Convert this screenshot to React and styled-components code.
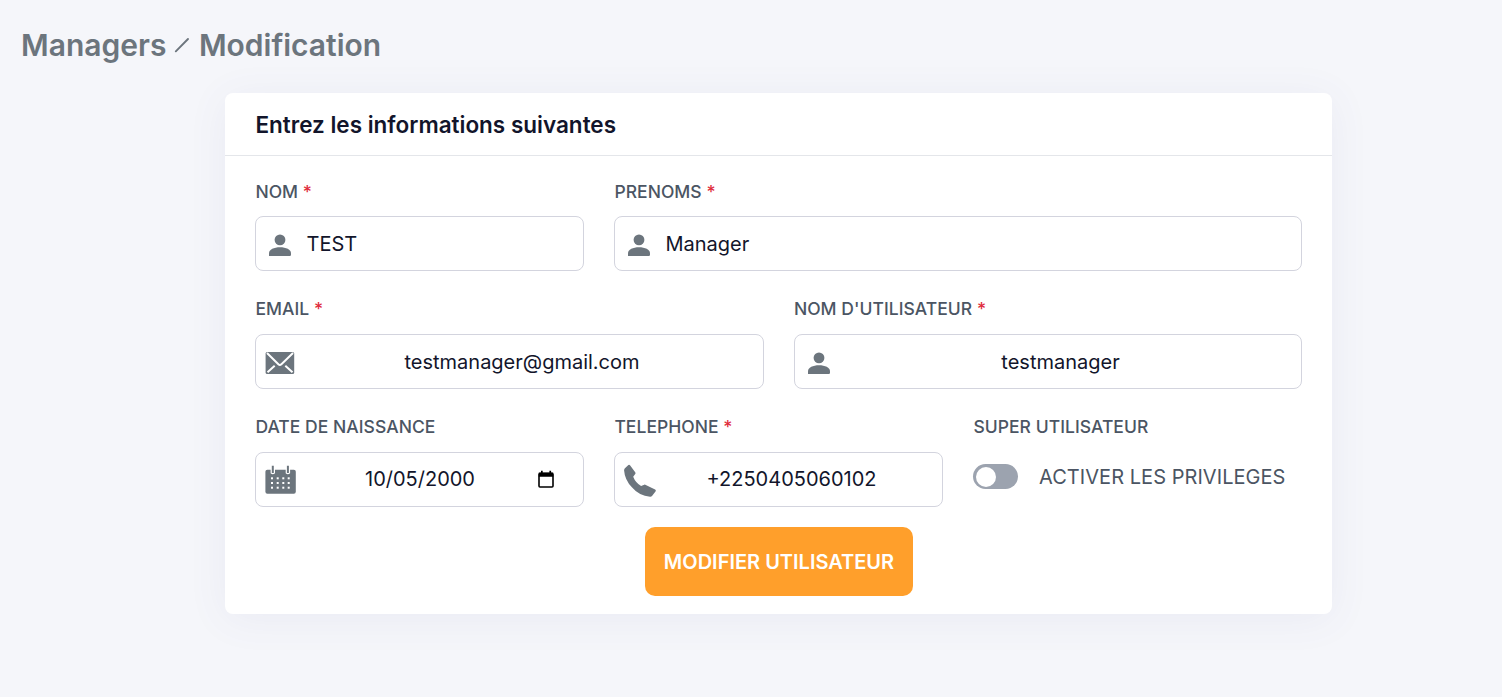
import React from 'react';
import styled, { createGlobalStyle } from 'styled-components';

const GlobalStyle = createGlobalStyle`
  *, *::before, *::after { box-sizing: border-box; }
  body {
    margin: 0;
    background: #f5f6fa;
    color: #12152b;
    font-family: Inter, "Liberation Sans", sans-serif;
  }
`;

const Page = styled.main`
  min-height: 697px;
  padding: 20px 20px 0;
`;

const Breadcrumb = styled.h1`
  display: flex;
  align-items: center;
  height: 50px;
  margin: 0;
  padding-left: 1px;
  color: #6c757d;
  font-size: 30px;
  font-weight: 600;
  line-height: 50px;
  white-space: nowrap;
`;

const Slash = styled.svg`
  width: 16px;
  height: 16px;
  margin: 0 8.5px 0 8px;
`;

const Card = styled.section`
  width: 1107px;
  height: 521px;
  margin: 23px 0 0 205px;
  border-radius: 8px;
  background: #fff;
  box-shadow: 0 5px 40px rgba(82, 85, 160, 0.07);
`;

const CardHeader = styled.header`
  height: 63px;
  padding: 0 30px;
  border-bottom: 1px solid #e4e6ea;
`;

const CardTitle = styled.h2`
  margin: 0;
  padding-left: 0.4px;
  font-size: 22.5px;
  font-weight: 600;
  line-height: 64px;
`;

const Form = styled.form`
  display: flex;
  flex-direction: column;
  padding: 20px 30px 0;
`;

const Row = styled.div`
  display: grid;
  grid-template-columns: ${(p) => p.$columns};
  column-gap: 30px;
  height: 118px;
  &:first-child { height: 117px; }
`;

const Label = styled.div`
  height: ${(p) => p.$height ?? 41}px;
  padding-left: 0.4px;
  color: #4b5563;
  font-size: 17.5px;
  font-weight: 500;
  letter-spacing: 0.04px;
  line-height: 31px;
  white-space: nowrap;
`;

const Required = styled.span`
  color: #e02d3c;
`;

const Control = styled.div`
  display: flex;
  align-items: center;
  height: 55px;
  padding-left: 9px;
  border: 1px solid #d3d4de;
  border-radius: 8px;
`;

const Value = styled.div`
  flex: 1;
  padding: 0 ${(p) => p.$right ?? 0}px ${(p) => (p.$raised ? 2 : 0)}px ${(p) => p.$left ?? 0}px;
  font-size: 20px;
  line-height: 30px;
  text-align: ${(p) => (p.$center ? 'center' : 'left')};
  white-space: nowrap;
`;

const Icon = styled.svg`
  flex: none;
  display: block;
  width: 32px;
  height: 34px;
  fill: #6c757d;
`;

const PickerIcon = styled.svg`
  flex: none;
  width: 18px;
  height: 20px;
  margin-right: 28px;
`;

const SwitchRow = styled.div`
  display: flex;
  align-items: center;
  height: 49px;
  color: #4b5563;
  font-size: 20px;
  letter-spacing: 0.05px;
  white-space: nowrap;
`;

const Track = styled.span`
  display: flex;
  align-items: center;
  width: 45px;
  height: 25px;
  margin-right: 21px;
  padding-left: 3px;
  border-radius: 13px;
  background: #9ca3af;
`;

const Knob = styled.span`
  width: 20px;
  height: 20px;
  border-radius: 50%;
  background: #fff;
`;

const Submit = styled.button`
  align-self: center;
  width: 268px;
  height: 69px;
  margin-top: -2px;
  padding: 0 0 0 1px;
  border: 0;
  border-radius: 10px;
  background: #ff9f2b;
  color: #fff;
  font: 600 20px/70px Inter, "Liberation Sans", sans-serif;
  white-space: nowrap;
`;

const PersonIcon = () => (
  <Icon viewBox="0 0 32 34">
    <circle cx="15" cy="12.9" r="5.4" />
    <path d="M4 28.9v-2.7C4 22.6 9 20.3 15 20.3s11 2.3 11 5.9v1.5c0 .8-.4 1.2-1.2 1.2z" />
  </Icon>
);

const MailIcon = () => (
  <Icon viewBox="0 0 32 34">
    <rect x=".6" y="7" width="28.6" height="22" rx="1.6" />
    <path d="M2 8l11.4 11.3q1.5 1.4 3 0L28 8M2.500 27.200l7.200-6.500M27.500 27.200l-7.200-6.500" fill="none" stroke="#fff" strokeWidth="2" />
  </Icon>
);

const DAYS_X = [7, 12.7, 18.3, 23.7];
const DAYS_Y = [15.3, 20, 24.7];

const CalendarIcon = () => (
  <Icon viewBox="0 0 32 34">
    <rect x=".4" y="6.7" width="30.4" height="24" rx="2" />
    <path d="M5.600 5.500h4.400v4.800q-2.200 2-4.400 0zM20.700 5.500h4.400v4.800q-2.200 2-4.400 0z" fill="#fff" />
    <path d="M6.800 2.700h2v7.300h-2zM21.900 2.700h2v7.300h-2z" />
    {DAYS_Y.map((y) => DAYS_X.map((x) => (
      <rect key={`${x}-${y}`} x={x - 1} y={y - 1} width="2" height="2" fill="#fff" />
    )))}
  </Icon>
);

const PhoneIcon = () => (
  <Icon viewBox="0 0 32 34">
    <path d="M4.400 2.100q.9-.8 1.600.2l5.200 7q.6.9 0 1.800l-2 2.600q2.200 5.800 7.900 9.300l3.100-1.300q.8-.3 1.600.2l9.300 4.700q1.200.7.4 1.800l-3.500 4.500q-.7.900-1.900.8-11-.8-18.200-9.400Q.8 17 .100 7.500q-.1-1.300.8-2.200z" />
  </Icon>
);

const Field = ({ label, required, labelHeight, children }) => (
  <div>
    <Label $height={labelHeight}>{label}{required && <Required> *</Required>}</Label>
    {children}
  </div>
);

export default function App() {
  return (
    <>
      <GlobalStyle />
      <Page>
        <Breadcrumb>
          Managers
          <Slash viewBox="0 0 16 16"><path d="M1.800 14.300L14 2" stroke="#6c757d" strokeWidth="1.900" strokeLinecap="round" /></Slash>
          Modification
        </Breadcrumb>
        <Card>
          <CardHeader><CardTitle>Entrez les informations suivantes</CardTitle></CardHeader>
          <Form>
            <Row $columns="329px 1fr">
              <Field label="NOM" required labelHeight={40}>
                <Control><PersonIcon /><Value $left={9.5}>TEST</Value></Control>
              </Field>
              <Field label="PRENOMS" required labelHeight={40}>
                <Control><PersonIcon /><Value $left={9.5}>Manager</Value></Control>
              </Field>
            </Row>
            <Row $columns="1fr 1fr">
              <Field label="EMAIL" required>
                <Control><MailIcon /><Value $center $left={10.5} $right={26}>testmanager@gmail.com</Value></Control>
              </Field>
              <Field label="NOM D'UTILISATEUR" required>
                <Control><PersonIcon /><Value $center $left={10.5} $right={26}>testmanager</Value></Control>
              </Field>
            </Row>
            <Row $columns="1fr 1fr 1fr">
              <Field label="DATE DE NAISSANCE">
                <Control>
                  <CalendarIcon />
                  <Value $raised $left={68}>10/05/2000</Value>
                  <PickerIcon viewBox="0 0 18 20">
                    <rect x="2" y="3.500" width="14" height="13.500" rx="1" fill="none" stroke="#000" strokeWidth="1.600" />
                    <path d="M1.800 2.500h14.400v4.200H1.800zM4 .7h1.700v3H4zM12.400.7h1.700v3h-1.700z" />
                  </PickerIcon>
                </Control>
              </Field>
              <Field label="TELEPHONE" required>
                <Control><PhoneIcon /><Value $raised $center $left={11} $right={26}>+2250405060102</Value></Control>
              </Field>
              <Field label="SUPER UTILISATEUR">
                <SwitchRow><Track><Knob /></Track>ACTIVER LES PRIVILEGES</SwitchRow>
              </Field>
            </Row>
            <Submit type="button">MODIFIER UTILISATEUR</Submit>
          </Form>
        </Card>
      </Page>
    </>
  );
}
